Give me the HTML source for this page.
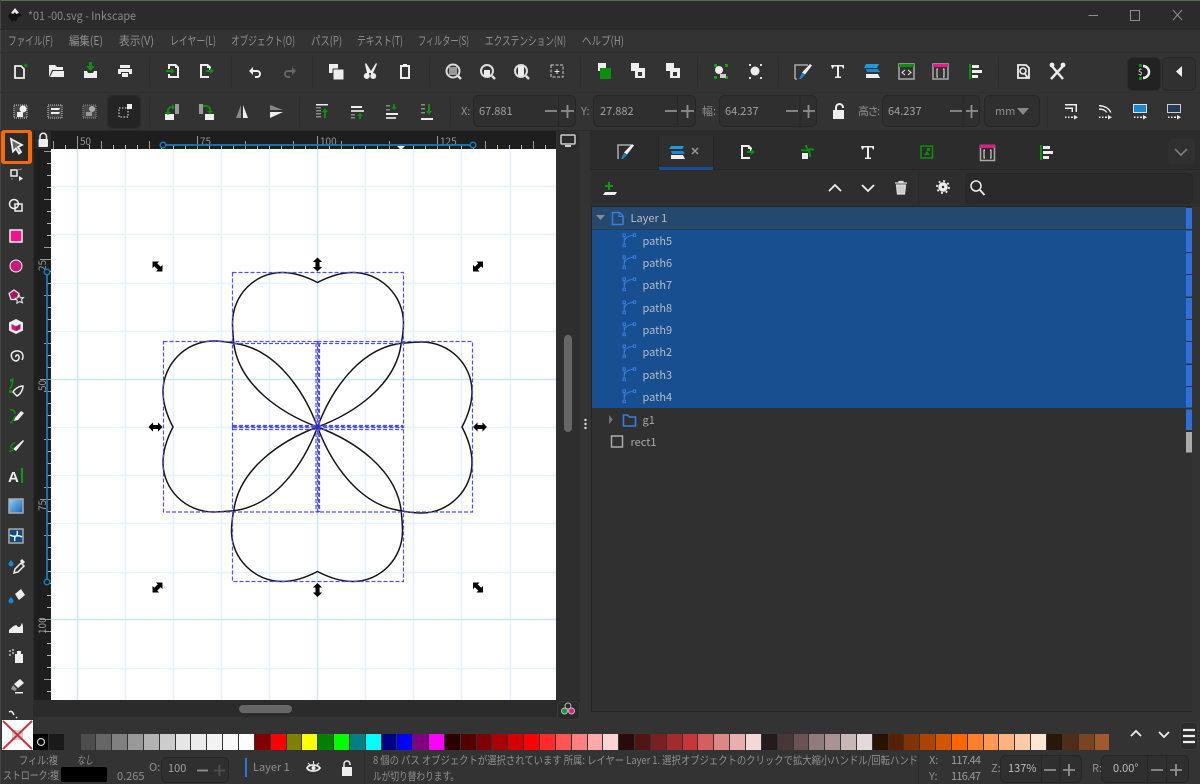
<!DOCTYPE html>
<html lang="ja"><head><meta charset="utf-8"><title>Inkscape</title>
<style>
html,body{margin:0;padding:0;width:1200px;height:784px;overflow:hidden;background:#333}
#wrap{position:absolute;left:0;top:0;width:1200px;height:784px;filter:blur(.3px)}
svg{position:absolute;left:0;top:0;display:block}
text{font-family:"Noto Sans CJK JP","Liberation Sans",sans-serif;font-size:11px;fill:#8f8f8f}
#pal{position:absolute;left:33px;top:734px;height:16px;display:flex}
#pal i{display:block;width:14.85px;height:16px;margin-right:1px}
</style></head><body><div id="wrap">
<svg width="1200" height="784" viewBox="0 0 1200 784" xmlns="http://www.w3.org/2000/svg">
<defs>
<symbol id="br" viewBox="0 0 16 16" overflow="visible"><g fill="none" stroke="#3a7de0" stroke-width="1"><rect x="1" y="1" width="2.600" height="2.600"/><rect x="1" y="12" width="2.600" height="2.600"/><rect x="12" y="1" width="2.600" height="2.600"/><path d="M2.300 3.600V12M2.500 9C3 5 7 3 12 2.400"/></g></symbol>
<path id="ar" d="M-6.500 0L-2.800-3.800V-1.700H2.800V-3.800L6.500 0 2.800 3.800V1.700H-2.800V3.800Z" fill="#000" stroke="#000" stroke-width=".7"/>
</defs>
<!-- window -->
<rect width="1200" height="784" fill="#333"/>
<rect width="1200" height="29" fill="#2b2b2b"/>
<rect width="1200" height="1" fill="#4f6f4f"/>
<rect x="0" width="1" height="784" fill="#444"/>
<g transform="translate(15,15)"><path d="M0-7 7 1 3 2 1 7-1 5-3 7-7 1Z" fill="#111"/><path d="M0-7 4-2 1-1 0-3-2-1-4-2Z" fill="#eee"/></g>
<text x="28" y="20" style="font-size:11.500px;fill:#8a8a8a" textLength="108" lengthAdjust="spacingAndGlyphs">*01 -00.svg - Inkscape</text>
<g stroke="#8f8f8f" fill="none" stroke-width="1"><path d="M1088.500 15.500H1098"/><rect x="1130.500" y="10.500" width="9" height="10"/><path d="M1173 10l9 10M1182 10l-9 10"/></g>
<!-- menu -->
<rect y="29" width="1200" height="1" fill="#2a2a2a"/>
<g style="font-size:12px">
<text x="8" y="45" style="font-size:12px" textLength="45" lengthAdjust="spacingAndGlyphs">ファイル(F)</text>
<text x="69" y="45" style="font-size:12px" textLength="34" lengthAdjust="spacingAndGlyphs">編集(E)</text>
<text x="119" y="45" style="font-size:12px" textLength="35" lengthAdjust="spacingAndGlyphs">表示(V)</text>
<text x="170" y="45" style="font-size:12px" textLength="46" lengthAdjust="spacingAndGlyphs">レイヤー(L)</text>
<text x="231" y="45" style="font-size:12px" textLength="64" lengthAdjust="spacingAndGlyphs">オブジェクト(O)</text>
<text x="311" y="45" style="font-size:12px" textLength="31" lengthAdjust="spacingAndGlyphs">パス(P)</text>
<text x="357" y="45" style="font-size:12px" textLength="46" lengthAdjust="spacingAndGlyphs">テキスト(T)</text>
<text x="418" y="45" style="font-size:12px" textLength="51" lengthAdjust="spacingAndGlyphs">フィルター(S)</text>
<text x="485" y="45" style="font-size:12px" textLength="81" lengthAdjust="spacingAndGlyphs">エクステンション(N)</text>
<text x="582" y="45" style="font-size:12px" textLength="42" lengthAdjust="spacingAndGlyphs">ヘルプ(H)</text>
</g>
<rect y="52" width="1200" height="1" fill="#2d2d2d"/>
<rect y="92" width="1200" height="1" fill="#2f2f2f"/>
<rect y="130" width="1200" height="1" fill="#2a2a2a"/>
<!-- toolbar separators -->
<g fill="#2c2c2c"><rect x="149" y="57" width="1" height="30"/><rect x="231" y="57" width="1" height="30"/><rect x="312" y="57" width="1" height="30"/><rect x="429" y="57" width="1" height="30"/><rect x="580" y="57" width="1" height="30"/><rect x="697" y="57" width="1" height="30"/><rect x="778" y="57" width="1" height="30"/><rect x="998" y="57" width="1" height="30"/>
<rect x="149" y="97" width="1" height="30"/><rect x="299" y="97" width="1" height="30"/><rect x="450" y="97" width="1" height="30"/><rect x="1047" y="97" width="1" height="30"/></g>
<!-- row 1 icons -->
<g fill="#eee" stroke="none">
<path d="M15 66h6l3 3v9H15Z" fill="none" stroke="#eee" stroke-width="1.800"/><path d="M25 63l1 1.500 1.500-.5-.5 1.500 1 1.500-2 0-1 1-.5-2-1.500-1 2-.5Z" fill="#0a8f0a"/>
<path d="M49 65h6l2 2h6v3H52l-3 7Z"/><path d="M50 77l3-6h11v6Z"/>
<path d="M84 71h3l1 2h5l1-2h3v7H84Z"/><path d="M89 62h3v4h3l-4.500 5-4.500-5h3Z" fill="#0a8f0a"/>
<path d="M120 65h10v3h-10ZM118 69h14v5h-3v-2h-8v2h-3ZM122 73h6v4h-6Z"/>
<path d="M168 64h8l3 3v11h-11v-4h2v2h7v-8h-2v-2h-5v3h-2Z"/><path d="M166 70h5v-2l4 3-4 3v-2h-5Z" fill="#0a8f0a"/>
<path d="M200 64h8l3 3v3h-2v-2h-2v-2h-5v10h7v2h-9Z"/><path d="M206 70h4v-2l4 3-4 3v-2h-4Z" fill="#0a8f0a"/>
<path d="M249 71l4-4v3h4a3.500 3.500 0 0 1 0 8h-2v-2h2a1.500 1.500 0 0 0 0-4h-4v3Z"/>
<path d="M296 71l-4-4v3h-4a3.500 3.500 0 0 0 0 8h2v-2h-2a1.500 1.500 0 0 1 0-4h4v3Z" fill="#666"/>
<rect x="329" y="64" width="9" height="9"/><rect x="333" y="69" width="11" height="11" stroke="#333"/>
<path d="M366 63l5 8 5-8 1 1-4 9a3 3 0 1 1-2 1l0-1-2-0 0 1a3 3 0 1 1-2-1l-2-9Z"/>
<path d="M400 65h3v-1h4v1h3v14h-10Zm2 2v10h6V67Z"/>
<g fill="none" stroke="#ddd"><circle cx="453" cy="71" r="6.500" stroke-width="2"/><path d="M458 76l3 3" stroke-width="2.500"/><circle cx="487" cy="71" r="6" stroke-width="2"/><path d="M492 76l3 3" stroke-width="2.500"/><circle cx="521" cy="71" r="6" stroke-width="2"/><path d="M526 76l3 3" stroke-width="2.500"/><rect x="551" y="65" width="12" height="12" stroke="#ccc" stroke-dasharray="3 1.500"/><path d="M557 69v5M554.500 71.500h5" stroke-width="1"/></g>
<rect x="449" y="67" width="8" height="8" fill="#999"/><rect x="484" y="70" width="6" height="6"/><rect x="518" y="66" width="6" height="10" rx="2"/>
<rect x="598" y="63" width="8" height="8"/><rect x="600" y="68" width="11" height="11" fill="#0a8f0a"/>
<rect x="631" y="63" width="8" height="8"/><rect x="635" y="68" width="10" height="10"/><rect x="638" y="72" width="4" height="4" fill="#333"/>
<rect x="666" y="63" width="8" height="8"/><rect x="670" y="68" width="10" height="10"/><rect x="673" y="72" width="4" height="4" fill="#333"/>
<g fill="#0fa00f"><rect x="714" y="64" width="3" height="3"/><rect x="725" y="64" width="3" height="3"/><rect x="714" y="76" width="3" height="3"/><rect x="725" y="76" width="3" height="3"/></g>
<circle cx="719" cy="70" r="4"/><path d="M720 74h6v4h-6Z" fill="#ccc"/>
<g fill="#ddd"><rect x="749" y="64" width="2" height="2"/><rect x="760" y="64" width="2" height="2"/><rect x="749" y="77" width="2" height="2"/><rect x="760" y="77" width="2" height="2"/></g><circle cx="755" cy="71" r="4.500"/>
<path d="M795 79V65h13M795 79h2" fill="none" stroke="#aaa" stroke-width="1.500"/><path d="M810 64l2 1.500-7 9-3-2Z"/><path d="M802 73l3 2-4 4-2 0Z" fill="#1b87d0"/>
<path d="M831 65h13v3.500h-1l-1-2h-3v10h2v1.500h-6V76.500h2v-10h-3l-1 2h-1Z"/>
<path d="M866 64h13l-2 4h-13Z" fill="#1b9ce0"/><path d="M866 69h12l2 3h-13Z" fill="#1b87d0"/><path d="M866 74h12l2 4h-14Z"/>
<rect x="899" y="64" width="15" height="15" fill="none" stroke="#aaa" stroke-width="1.500"/><rect x="899" y="64" width="15" height="3" fill="#0a8f0a"/><path d="M905 70l-3 2.500 3 2.500M908 70l3 2.500-3 2.500" fill="none" stroke="#eee"/>
<rect x="933" y="64" width="15" height="15" fill="none" stroke="#aaa" stroke-width="1.500"/><rect x="933" y="64" width="15" height="3" fill="#f0148c"/><path d="M938 69h-1v8h1M943 69h1v8h-1" fill="none" stroke="#eee"/>
<rect x="969" y="64" width="2" height="15" fill="#0a8f0a"/><rect x="972" y="65" width="7" height="3"/><rect x="972" y="70" width="10" height="3"/><rect x="972" y="75" width="6" height="3"/>
<path d="M1018 65h8l3 3v10h-11Z" fill="none" stroke="#eee" stroke-width="1.800"/><circle cx="1023" cy="71" r="3" fill="none" stroke="#eee" stroke-width="1.600"/><path d="M1025 74l3 4" stroke="#eee" stroke-width="1.800"/>
<path d="M1051 65l12 14M1064 65l-13 14" stroke="#eee" stroke-width="2.400"/><circle cx="1052" cy="65" r="2.400" fill="#eee"/><circle cx="1063" cy="65" r="2.400" fill="#eee"/>
</g>
<!-- snap buttons -->
<rect x="1127.500" y="57.500" width="33" height="33" rx="5" fill="#222" stroke="#2c2c2c"/>
<path d="M1143 66a6 6 0 0 1 0 12" fill="none" stroke="#eee" stroke-width="2.500"/><rect x="1139" y="64" width="3" height="3" fill="#0a8f0a"/><rect x="1139" y="77" width="3" height="3" fill="#0a8f0a"/><text x="1138" y="75" style="font-size:8px;fill:#eee">$</text>
<rect x="1162.500" y="57.500" width="33" height="33" rx="5" fill="#303030" stroke="#2a2a2a"/>
<path d="M1182 66v11l-6-5.500Z" fill="#eee"/>
<!-- row 2 icons -->
<g fill="#eee">
<rect x="14" y="105" width="13" height="13" fill="#444" stroke="#ccc" stroke-dasharray="1 1"/><circle cx="23" cy="109" r="3.500"/><rect x="17" y="112" width="6" height="5"/>
<rect x="48" y="105" width="14" height="13" fill="#444" stroke="#ccc" stroke-dasharray="1 1"/><path d="M51 108h9l-1 2h-8ZM51 112h9l-1 2h-8Z"/>
<rect x="83" y="105" width="13" height="13" fill="#4a4a4a" stroke="#888" stroke-dasharray="1 1"/><circle cx="92" cy="109" r="3" fill="#aaa"/><rect x="86" y="112" width="6" height="4" fill="#999"/>
</g>
<rect x="107.500" y="95.500" width="33" height="33" rx="5" fill="#242424" stroke="#2c2c2c"/>
<rect x="119" y="108" width="9" height="9" fill="none" stroke="#eee" stroke-dasharray="1.500 1.500"/><rect x="127" y="104" width="5" height="5" fill="#eee"/>
<g fill="#eee">
<rect x="165" y="114" width="9" height="6"/><rect x="175" y="104" width="4" height="10" fill="#999"/><path d="M167 112a5 5 0 0 1 5-6v-2l3 3-3 3v-2a3 3 0 0 0-3 4h2l-3 3-3-3Z" fill="#0a8f0a"/>
<rect x="199" y="104" width="4" height="10" fill="#999"/><rect x="205" y="114" width="9" height="6"/><path d="M203 105h3a5 5 0 0 1 5 6h2l-3 3-3-3h2a3 3 0 0 0-3-4h-3Z" fill="#0a8f0a"/>
<path d="M241 105v13h-5Z" fill="#888"/><path d="M243 105l5 13h-5Z"/>
<path d="M270 105l13 5h-13Z" fill="#888"/><path d="M270 112h13l-13 6Z"/>
<rect x="316" y="104" width="12" height="1.500"/><g fill="#888"><rect x="316" y="107" width="5" height="1.500"/><rect x="316" y="110" width="5" height="1.500"/><rect x="316" y="113" width="5" height="1.500"/><rect x="316" y="116" width="5" height="1.500"/></g><path d="M325 108l3 4h-2v6h-2v-6h-2Z" fill="#0a8f0a"/>
<rect x="351" y="106" width="11" height="2"/><rect x="351" y="110" width="13" height="2" fill="#ccc"/><g fill="#888"><rect x="351" y="114" width="4" height="1.500"/><rect x="351" y="117" width="4" height="1.500"/></g><path d="M360 113l3 3h-2v3h-2v-3h-2Z" fill="#0a8f0a"/>
<rect x="386" y="113" width="12" height="2"/><rect x="386" y="117" width="10" height="2" fill="#ccc"/><g fill="#888"><rect x="386" y="105" width="4" height="1.500"/><rect x="386" y="109" width="4" height="1.500"/></g><path d="M395 104v3h2l-3 3-3-3h2v-3Z" fill="#0a8f0a"/>
<rect x="421" y="118" width="12" height="2"/><g fill="#888"><rect x="421" y="104" width="4" height="1.500"/><rect x="421" y="108" width="4" height="1.500"/><rect x="421" y="112" width="4" height="1.500"/></g><path d="M430 104v7h2l-3 4-3-4h2v-7Z" fill="#0a8f0a"/>
<path d="M833 110h11v9h-11Z"/><path d="M836 110v-2.500a3.500 3.500 0 0 1 7 0v.5" fill="none" stroke="#eee" stroke-width="2"/>
</g>
<!-- row 2 fields -->
<g fill="#2f2f2f" stroke="#272727"><rect x="473.500" y="95.500" width="102" height="31" rx="5"/><rect x="593.500" y="95.500" width="102" height="31" rx="5"/><rect x="719.500" y="95.500" width="97" height="31" rx="5"/><rect x="882.500" y="95.500" width="97" height="31" rx="5"/><rect x="984.500" y="95.500" width="55" height="31" rx="5"/></g>
<g>
<text x="461" y="115">X:</text><text x="479" y="115" style="fill:#a0a0a0">67.881</text>
<text x="581" y="115">Y:</text><text x="600" y="115" style="fill:#a0a0a0">27.882</text>
<text x="702" y="115">幅:</text><text x="725" y="115" style="fill:#a0a0a0">64.237</text>
<text x="858" y="115" textLength="22">高さ:</text><text x="888" y="115" style="fill:#a0a0a0">64.237</text>
<text x="995" y="115">mm</text></g>
<path d="M1017 108h12l-6 7Z" fill="#888"/>
<g stroke="#8f8f8f" stroke-width="1.800" fill="none"><path d="M545 111h12M561 111h13M567.500 105v13M665 111h12M681 111h13M687.500 105v13M786 111h12M803 111h12M808.500 105v13M950 111h12M966 111h12M971.500 105v13"/></g>
<path d="M558.500 96v30M677.500 96v30M800 96v30M963 96v30" stroke="#272727" fill="none"/>
<g fill="#eee">
<path d="M1065 104h12v8h-1.500v-6.500H1065ZM1065 107.500h8v4.500h-1.500v-3H1065Z"/><path d="M1065 116.500h1.500v1.500H1065ZM1068 116.500h1.500v1.500H1068ZM1071 116.500h2v1.500h-2Z"/><path d="M1074 115l4 2.250-4 2.250Z"/>
<path d="M1099 105a13 11 0 0 1 12.500 7.500h-1.500a11 9 0 0 0-11-6ZM1099 108.500a8 7 0 0 1 8.500 4h-1.500a6.500 5 0 0 0-7-2.500Z"/><path d="M1099 116.500h1.500v1.500H1099ZM1102 116.500h1.500v1.500H1102ZM1105 116.500h2v1.500h-2Z"/><path d="M1108 115l4 2.250-4 2.250Z"/>
<rect x="1133.500" y="104.500" width="13" height="8" fill="#1b87d0" stroke="#ddd"/><path d="M1134 116.500h1.500v1.500H1134ZM1137 116.500h1.500v1.500H1137ZM1140 116.500h2v1.500h-2Z"/><path d="M1143 115l4 2.250-4 2.250Z"/>
<rect x="1167.500" y="104.500" width="13" height="8" fill="#223a5c" stroke="#ccc"/><path d="M1168 116.500h1.500v1.500H1168ZM1171 116.500h1.500v1.500H1171ZM1174 116.500h2v1.500h-2Z"/><path d="M1177 115l4 2.250-4 2.250Z"/></g>
<!-- left tools -->
<rect x="33" y="131" width="1" height="600" fill="#2a2a2a"/>
<rect x="1" y="130" width="31" height="34" rx="3" fill="#ff6a00"/><rect x="5" y="133" width="23" height="28" fill="#2a2a2a"/>
<path d="M11 139l11 6-4 2 3 5-2 1.500-3-5-3 3Z" fill="#666" stroke="#eee" stroke-width="1.800"/>
<g fill="#eee">
<rect x="11" y="170" width="6" height="6" fill="none" stroke="#eee" stroke-width="1.500"/><path d="M17 170l5-1M12 178v2" stroke="#888" fill="none"/><path d="M19 176l4 2.500-4 2.500Z"/>
<circle cx="14" cy="204" r="4.500" fill="none" stroke="#eee" stroke-width="1.500"/><rect x="15" y="204" width="7" height="7" fill="none" stroke="#eee" stroke-width="1.500"/>
<rect x="10" y="230" width="12" height="12" fill="#f0148c" stroke="#eee" stroke-width="1.500"/>
<circle cx="16" cy="266" r="6" fill="#c9197f" stroke="#eee" stroke-width="1"/>
<path d="M14 290l5 3.500-2 6-6 0-2-6Z" fill="#a81565" stroke="#eee" stroke-width="1.200"/><path d="M19 295l1.500 2.800 3-.3-2 2.300 1 3-3-1.200-2.600 1.700.3-3-2.200-2 3-.6Z" fill="#333" stroke="#eee" stroke-width="1"/>
<path d="M16 319l7 3.500v8l-7 3.500-7-3.500v-8Z"/><path d="M11.500 324l4.500 2.200v5l-4.500-2.200Z" fill="#d6176f"/><path d="M20.500 324l-4.500 2.200v5l4.500-2.200Z" fill="#a81565"/>
<g fill="none" stroke="#eee" stroke-width="1.500"><path d="M16 357a1.500 1.500 0 0 1 2-2 3.500 3.500 0 0 1-2 6 5.500 5.500 0 0 1-4-8 7 7 0 0 1 10 0 7 7 0 0 1 0 7"/>
<path d="M13 392c3-5 8-6 10-6 0 3-2 8-6 10Z"/><path d="M13 378c0 4-1 8-3 11" stroke="#0a8f0a"/>
<path d="M10 423c4-1 3-5 6-7" stroke="#0a8f0a"/><path d="M10 410c3-1 5 1 5 4" stroke="#0a8f0a"/></g>
<rect x="10" y="379" width="3" height="3" fill="#0a8f0a"/><rect x="9" y="390" width="3" height="3" fill="#0a8f0a"/>
<path d="M15 418l6-7 3 2-6 7-4 1Z"/>
<path d="M13 449l10-9 1 1-8 10Z"/><path d="M9 451c3 1 6-2 3-3s1-5 3-5" fill="none" stroke="#0a8f0a" stroke-width="1.500"/>
</g>
<text x="8" y="482" style="font-size:15px;font-weight:700;fill:#eee;font-family:'Liberation Sans',sans-serif">A</text><rect x="21" y="468" width="2" height="15" fill="#0a9a0a"/>
<defs><linearGradient id="gr" x1="0" y1="0" x2="1" y2="1"><stop offset="0" stop-color="#9ad0f5"/><stop offset="1" stop-color="#0c62b8"/></linearGradient></defs>
<rect x="9" y="499" width="14" height="14" fill="url(#gr)" stroke="#aaa" stroke-width="1.500"/>
<rect x="9" y="529" width="14" height="14" fill="#174a7c" stroke="#aaa" stroke-width="1.500"/><path d="M10 535c3 2 5 1 6 1s2-3 1-5M22 537c-3-2-5-1-6-1s-2 3-1 5" fill="none" stroke="#dff" stroke-width="1.500"/>
<g fill="#eee"><path d="M15 569l6-6 3 3-6 6-4 1Z" fill="none" stroke="#eee" stroke-width="1.500"/><path d="M20 561l2-2 3 3-2 2Z"/><path d="M11 560c2 2.500 2.500 3 2.500 4a2.500 2.500 0 0 1-5 0c0-1 .5-1.500 2.500-4Z" fill="#1b87d0"/>
<path d="M15 594l6-5 4 6-6 5Z"/><path d="M11 597c2 2.500 2.500 3 2.500 4a2.500 2.500 0 0 1-5 0c0-1 .5-1.500 2.500-4Z" fill="#1b87d0"/>
<path d="M9 633v-3c2-2 4-4 7-5 1 0 1 2 3 2s2-3 3-4c1 2 1 4 1 5v5Z"/>
<rect x="15" y="654" width="8" height="9"/><rect x="17" y="651" width="4" height="3"/><g fill="#999"><rect x="9" y="650" width="2" height="2"/><rect x="12" y="652" width="2" height="2"/><rect x="9" y="654" width="2" height="2"/><rect x="12" y="649" width="2" height="2"/></g>
<path d="M14 684l6-5 4 4-6 5Z"/><path d="M13 685l4 4-2 2-4-2Z" fill="#999"/><rect x="15" y="692" width="8" height="1.500"/>
</g>
<path d="M9 712c3-2 4 1 5 3M16 717l1 1" stroke="#eee" fill="none" stroke-width="1.500"/>
<!-- ruler + canvas -->
<rect x="34" y="131" width="522" height="18" fill="#1e1e1e"/>
<rect x="34" y="149" width="17" height="551" fill="#1e1e1e"/>
<rect x="51" y="149" width="505" height="551" fill="#fff"/>
<!-- grid -->
<g stroke="#e3f3fc" stroke-width="1.500"><path d="M125.500 149V700M173.500 149V700M221.500 149V700M269.500 149V700M365.500 149V700M413.500 149V700M461.500 149V700M510.500 149V700"/>
<path d="M51 186.500H556M51 234.500H556M51 283.500H556M51 331.500H556M51 427.500H556M51 475.500H556M51 523.500H556M51 572.500H556M51 668.500H556"/></g>
<g stroke="#c8e8f8" stroke-width="1.500"><path d="M77.500 149V700M317.500 149V700M51 379.500H556M51 619.500H556"/></g>
<!-- ruler ticks -->
<g stroke="#bbb" fill="none"><path d="M53 147H556" stroke-width="4" stroke-dasharray="1 11"/><path d="M53 145H556" stroke-width="8" stroke-dasharray="1 47" stroke="#999"/><path d="M49 151V700" stroke-width="4" stroke-dasharray="1 11"/><path d="M47 151V700" stroke-width="6" stroke-dasharray="1 47" stroke="#999"/>
<path d="M77.500 136V149M197.500 136V149M317.500 136V149M437.500 136V149M40 379.500H51M40 259.500H51M40 619.500H51M40 499.500H51" stroke="#999"/></g>
<rect x="35" y="131" width="16" height="18" rx="2" fill="#2a2a2a"/>
<rect x="38.500" y="139" width="9.500" height="8" rx="1" fill="#eee"/><path d="M40 139v-2.500a3.250 3.250 0 0 1 6.500 0v2.500" fill="none" stroke="#eee" stroke-width="1.500"/>
<g><text x="80" y="145" style="font-size:10px;fill:#999">50</text><text x="200" y="145" style="font-size:10px;fill:#999">75</text><text x="320" y="145" style="font-size:10px;fill:#999">100</text><text x="440" y="145" style="font-size:10px;fill:#999">125</text>
<text transform="translate(46,271) rotate(-90)" style="font-size:10px;fill:#999">25</text><text transform="translate(46,391) rotate(-90)" style="font-size:10px;fill:#999">50</text><text transform="translate(46,511) rotate(-90)" style="font-size:10px;fill:#999">75</text><text transform="translate(46,634) rotate(-90)" style="font-size:10px;fill:#999">100</text></g>
<path d="M163 145H473" stroke="#1a7cbc" stroke-width="1.800"/><circle cx="163" cy="145" r="2.800" fill="#1e1e1e" stroke="#1a7cbc" stroke-width="1.500"/><circle cx="473" cy="145" r="2.800" fill="#1e1e1e" stroke="#1a7cbc" stroke-width="1.500"/>
<path d="M397 146h8l-4 4Z" fill="#fff"/>
<path d="M47 272V582" stroke="#1a7cbc" stroke-width="1.800"/><circle cx="47" cy="272" r="2.800" fill="#1e1e1e" stroke="#1a7cbc" stroke-width="1.500"/><circle cx="47" cy="582" r="2.800" fill="#1e1e1e" stroke="#1a7cbc" stroke-width="1.500"/>
<!-- flower -->
<g fill="none" stroke="#151515" stroke-width="1.500">
<path d="M317.500 427C355 413 395 385 401 345C403 335 403.500 329 403.500 323C403.500 295 380 272.500 353 272.500C340 272.500 328 277 317.500 282.500C307 277 295 272.500 282 272.500C255 272.500 232.500 295 232.500 323C232.500 329 233 335 234 345C240 385 280 413 317.500 427Z"/>
<path d="M317.500 427C355 413 395 385 401 345C403 335 403.500 329 403.500 323C403.500 295 380 272.500 353 272.500C340 272.500 328 277 317.500 282.500C307 277 295 272.500 282 272.500C255 272.500 232.500 295 232.500 323C232.500 329 233 335 234 345C240 385 280 413 317.500 427Z" transform="rotate(90 317.500 427)"/>
<path d="M317.500 427C355 413 395 385 401 345C403 335 403.500 329 403.500 323C403.500 295 380 272.500 353 272.500C340 272.500 328 277 317.500 282.500C307 277 295 272.500 282 272.500C255 272.500 232.500 295 232.500 323C232.500 329 233 335 234 345C240 385 280 413 317.500 427Z" transform="rotate(180 317.500 427)"/>
<path d="M317.500 427C355 413 395 385 401 345C403 335 403.500 329 403.500 323C403.500 295 380 272.500 353 272.500C340 272.500 328 277 317.500 282.500C307 277 295 272.500 282 272.500C255 272.500 232.500 295 232.500 323C232.500 329 233 335 234 345C240 385 280 413 317.500 427Z" transform="rotate(270 317.500 427)"/>
</g>
<!-- selection boxes -->
<g fill="none" stroke="#5050e6" stroke-width="1.200" stroke-dasharray="4 2">
<rect x="232.500" y="272.500" width="171" height="155"/>
<rect x="232.500" y="426.500" width="171" height="155"/>
<rect x="163.500" y="341.500" width="155" height="170.500"/>
<rect x="317.500" y="341.500" width="155" height="170.500"/>
<path d="M233 343.500H403M233 425.500H403M233 429.500H403M316 343V512M319.500 343V512"/>
</g>
<circle cx="317.500" cy="427" r="2.500" fill="#2a2ab0" opacity=".8"/>
<!-- handles -->
<use href="#ar" transform="translate(157.500,266.500) rotate(45)"/>
<use href="#ar" transform="translate(478,266.500) rotate(-45)"/>
<use href="#ar" transform="translate(157.500,587.500) rotate(-45)"/>
<use href="#ar" transform="translate(478,587.500) rotate(45)"/>
<use href="#ar" transform="translate(317.500,264.500) rotate(90)"/>
<use href="#ar" transform="translate(317.500,590) rotate(90)"/>
<use href="#ar" transform="translate(155.500,427)"/>
<use href="#ar" transform="translate(480,427)"/>
<!-- right scroll / bottom -->
<rect x="556" y="131" width="24" height="586" fill="#2e2e2e"/>
<rect x="558.500" y="132.500" width="20" height="17" rx="3" fill="#2a2a2a"/>
<rect x="561" y="135" width="14" height="9" rx="1" fill="none" stroke="#ccc" stroke-width="1.500"/><path d="M565 146h6" stroke="#ccc" stroke-width="2"/>
<rect x="564" y="335" width="8" height="97" rx="4" fill="#666"/>
<rect x="34" y="700" width="546" height="17" fill="#2b2b2b"/>
<rect x="239" y="705" width="53" height="8" rx="4" fill="#666"/>
<rect x="557.500" y="701.500" width="22" height="18" rx="4" fill="#2a2a2a" stroke="#3a3a3a"/>
<circle cx="568" cy="706" r="3" fill="none" stroke="#bbb"/><circle cx="564.500" cy="711" r="3" fill="#0a9a3a" stroke="#bbb"/><circle cx="571.500" cy="711" r="3" fill="#f0148c" stroke="#bbb"/>
<!-- panel -->
<g fill="#ddd"><circle cx="585.500" cy="420" r="1.200"/><circle cx="585.500" cy="424" r="1.200"/><circle cx="585.500" cy="428" r="1.200"/></g>
<rect x="590" y="131" width="610" height="39" fill="#2c2c2c"/>
<rect x="590" y="170" width="610" height="37" fill="#2e2e2e"/>
<rect x="590" y="169" width="610" height="1" fill="#262626"/>
<rect x="659" y="136" width="54" height="31" fill="#2f2f2f"/>
<rect x="659" y="167" width="54" height="3" fill="#174f90"/>
<path d="M658.500 136v33M713.500 136v33" stroke="#262626" fill="none"/>
<g>
<path d="M618 159V145h13" fill="none" stroke="#aaa" stroke-width="1.500"/><path d="M632 144l2 1.500-7 9-3-2Z" fill="#eee"/><path d="M624 153l3 2-4 4-2 0Z" fill="#1b87d0"/>
<path d="M671 146h13l-2 3h-13Z" fill="#1b9ce0"/><path d="M671 151h12l2 3h-13Z" fill="#1b87d0"/><path d="M671 155h12l2 4h-14Z" fill="#eee"/>
<path d="M692 148l6 6M698 148l-6 6" stroke="#999" stroke-width="1.500" fill="none"/>
<g transform="translate(541,81)"><path d="M200 64h8l3 3v3h-2v-2h-2v-2h-5v10h7v2h-9Z" fill="#eee"/><path d="M206 70h4v-2l4 3-4 3v-2h-4Z" fill="#0a8f0a"/></g>
<rect x="802" y="153" width="6" height="6" fill="#eee"/><path d="M806 145c0 3 2 4 3 6 1 2 1 4 1 6M801 150c2 0 5 1 7 0s4-1 6 0" fill="none" stroke="#0a8f0a" stroke-width="2"/>
<path d="M861 146h13v3.500h-1l-1-2h-3v10h2v1.500h-6V157.500h2v-10h-3l-1 2h-1Z" fill="#eee"/>
<rect x="921" y="146" width="11.500" height="12" fill="none" stroke="#0a8f0a" stroke-width="1.500"/><path d="M924 155l3-4 3 4Z" fill="#0a8f0a"/><rect x="927" y="148" width="3" height="3" fill="#0a8f0a"/>
<rect x="980.500" y="145.500" width="14" height="15" fill="none" stroke="#aaa" stroke-width="1.500"/><rect x="980" y="145" width="15" height="3" fill="#f0148c"/><path d="M985 150h-1v8h1M990 150h1v8h-1" fill="none" stroke="#eee"/>
<rect x="1040" y="145" width="2" height="15" fill="#0a8f0a"/><rect x="1043" y="146" width="7" height="3" fill="#eee"/><rect x="1043" y="151" width="10" height="3" fill="#eee"/><rect x="1043" y="156" width="6" height="3" fill="#eee"/>
</g>
<rect x="1168" y="139" width="27" height="25" rx="4" fill="#303030"/>
<path d="M1175 149l6 6 6-6" fill="none" stroke="#777" stroke-width="1.800"/>
<!-- panel toolbar -->
<path d="M609 182v8M605 186h8" stroke="#0fa00f" stroke-width="1.800"/><path d="M605 192h12l-2 3h-12Z" fill="#eee"/>
<path d="M829 191l6-6 6 6M862 185l6 6 6-6" fill="none" stroke="#eee" stroke-width="1.800"/>
<path d="M895 183h12M899 183v-1.500h4v1.500M896.500 185l1 9h7l1-9Z" fill="#ccc" stroke="#ddd" stroke-width="1.200"/>
<path d="M918.500 172v32" stroke="#282828"/>
<circle cx="943" cy="187" r="3" fill="none" stroke="#eee" stroke-width="3.500"/><circle cx="943" cy="187" r="6" fill="none" stroke="#eee" stroke-width="1.800" stroke-dasharray="2 2.700"/>
<rect x="965.500" y="173.500" width="227" height="30" rx="5" fill="#2a2a2a" stroke="#262626"/>
<circle cx="976" cy="186" r="5" fill="none" stroke="#eee" stroke-width="1.500"/><path d="M980 190l4.500 5" stroke="#eee" stroke-width="1.800"/>
<!-- list -->
<rect x="592" y="207" width="600" height="504" fill="#303030"/>
<rect x="591" y="206" width="1" height="506" fill="#262626"/>
<rect x="591" y="206" width="601" height="1" fill="#262626"/>
<rect x="591" y="711" width="601" height="1" fill="#262626"/>
<rect x="592" y="207" width="594" height="22.500" fill="#25486f"/>
<rect x="592" y="230" width="594" height="178" fill="#174f90"/>
<path d="M596 215h9l-4.500 5Z" fill="#808b9a"/>
<path d="M612.500 212.500h7l3.500 3.500v8.500h-10.500Z" fill="none" stroke="#3a7de0" stroke-width="1.500"/><path d="M619 212.500v4h4" fill="none" stroke="#3a7de0" stroke-width="1"/>
<g><text x="630.500" y="222" style="fill:#b4bcc6">Layer 1</text>
<text x="642.500" y="245" style="fill:#b4bcc6">path5</text><text x="642.500" y="267" style="fill:#b4bcc6">path6</text><text x="642.500" y="289" style="fill:#b4bcc6">path7</text><text x="642.500" y="312" style="fill:#b4bcc6">path8</text><text x="642.500" y="334" style="fill:#b4bcc6">path9</text><text x="642.500" y="356" style="fill:#b4bcc6">path2</text><text x="642.500" y="379" style="fill:#b4bcc6">path3</text><text x="642.500" y="401" style="fill:#b4bcc6">path4</text>
<text x="642.500" y="424" style="fill:#a8a8a8">g1</text><text x="630.500" y="446" style="fill:#a8a8a8">rect1</text></g>
<use href="#br" x="622" y="233" width="15" height="15"/><use href="#br" x="622" y="255" width="15" height="15"/><use href="#br" x="622" y="277" width="15" height="15"/><use href="#br" x="622" y="300" width="15" height="15"/><use href="#br" x="622" y="322" width="15" height="15"/><use href="#br" x="622" y="344" width="15" height="15"/><use href="#br" x="622" y="367" width="15" height="15"/><use href="#br" x="622" y="389" width="15" height="15"/>
<path d="M609 415v9l4-4.500Z" fill="#707070"/>
<path d="M623.500 415h4l2 2h6v9h-12Z" fill="none" stroke="#3a7de0" stroke-width="1.500"/>
<rect x="611.500" y="436" width="11" height="11" fill="none" stroke="#aaa" stroke-width="1.500"/>
<g fill="#2f6fd8"><rect x="1186" y="208" width="6" height="21"/><rect x="1186" y="230.500" width="6" height="21.500"/><rect x="1186" y="253" width="6" height="21"/><rect x="1186" y="275" width="6" height="21.500"/><rect x="1186" y="298" width="6" height="21"/><rect x="1186" y="320" width="6" height="21"/><rect x="1186" y="342" width="6" height="21.500"/><rect x="1186" y="365" width="6" height="21"/><rect x="1186" y="387" width="6" height="20.500"/><rect x="1186" y="409.500" width="6" height="20.500"/></g>
<rect x="1186" y="432" width="6" height="20.500" fill="#aaa"/>
<!-- fill/stroke indicator -->
<rect x="2" y="720" width="31" height="30" fill="#fff"/><rect x="12" y="730" width="11" height="10" fill="#ccc"/><path d="M3 721l29 28M32 721 3 749" stroke="#c8343e" stroke-width="2"/>
<!-- palette right buttons -->
<path d="M1131 736l5-5 5 5M1159 732l5 5 5-5" fill="none" stroke="#eee" stroke-width="1.800"/>
<rect x="1180.500" y="722.500" width="17" height="27" rx="4" fill="#2b2b2b" stroke="#3c3c3c"/>
<path d="M1183 730h12M1183 736h12M1183 742h12" stroke="#eee" stroke-width="2.200"/>
<!-- status -->
<g>
<text x="19" y="764" textLength="39" lengthAdjust="spacingAndGlyphs">フィル:複</text>
<text x="77" y="764" textLength="16" lengthAdjust="spacingAndGlyphs" font-style="italic">なし</text>
<text x="3" y="779" textLength="56" lengthAdjust="spacingAndGlyphs">ストローク:複</text>
<text x="117" y="780">0.265</text>
<text x="149" y="771">O:</text>
</g>
<rect x="61" y="767" width="46" height="15" rx="2" fill="#000"/>
<rect x="161.500" y="757.500" width="67" height="25" rx="5" fill="#2f2f2f" stroke="#272727"/>
<text x="168" y="772" style="fill:#a0a0a0">100</text>
<path d="M197 770.500h11" stroke="#8f8f8f" stroke-width="1.800"/><path d="M214 770.500h11M219.500 765v11" stroke="#505050" stroke-width="1.800"/>
<rect x="245" y="758" width="2" height="19" fill="#2f6fd8"/>
<text x="253" y="771">Layer 1</text>
<path d="M307 768c2-4 10-4 13 0-3 4-11 4-13 0Z" fill="none" stroke="#eee" stroke-width="1.800"/><circle cx="313.500" cy="768" r="2" fill="#eee"/><path d="M308 763l2 2M313.500 761v3M319 763l-2 2" stroke="#eee"/>
<rect x="342" y="767" width="10" height="9" fill="#eee"/><path d="M344 767v-3a3 3 0 0 1 6 0v1" fill="none" stroke="#eee" stroke-width="1.500"/>
<path d="M364.500 752v32M918.500 752v32" stroke="#2c2c2c"/>
<text x="373" y="764" textLength="545" lengthAdjust="spacingAndGlyphs">8 個の パス オブジェクトが選択されています 所属: レイヤー Layer 1. 選択オブジェクトのクリックで拡大縮小ハンドル/回転ハンド</text>
<text x="373" y="780" textLength="86" lengthAdjust="spacingAndGlyphs">ルが切り替わります。</text>
<text x="929" y="764">X:</text><text x="951" y="764" textLength="30" style="fill:#9a9a9a">117.44</text>
<text x="929" y="780">Y:</text><text x="951" y="780" textLength="30" style="fill:#9a9a9a">116.47</text>
<text x="991" y="772">Z:</text>
<rect x="1000.500" y="755.500" width="81" height="27" rx="5" fill="#2f2f2f" stroke="#272727"/>
<text x="1008" y="772" style="fill:#bbb">137%</text>
<path d="M1044 770h12M1063 770h12M1069 764v12" stroke="#8f8f8f" stroke-width="1.800"/>
<path d="M1041.500 756v26M1060 756v26" stroke="#272727"/>
<text x="1092" y="772">R:</text>
<rect x="1101.500" y="755.500" width="87" height="27" rx="5" fill="#2f2f2f" stroke="#272727"/>
<text x="1113" y="772" style="fill:#bbb">0.00°</text>
<path d="M1151 770h12M1170 770h12M1176 764v12" stroke="#8f8f8f" stroke-width="1.800"/>
<path d="M1147.500 756v26M1166.500 756v26" stroke="#272727"/>
</svg>
<div id="pal"><i style="background:#000"></i><i style="background:#1a1a1a"></i><i style="background:#333"></i><i style="background:#4d4d4d"></i><i style="background:#666"></i><i style="background:#808080"></i><i style="background:#999"></i><i style="background:#b3b3b3"></i><i style="background:#ccc"></i><i style="background:#e6e6e6"></i><i style="background:#ececec"></i><i style="background:#f2f2f2"></i><i style="background:#f9f9f9"></i><i style="background:#fff"></i><i style="background:#800000"></i><i style="background:#f00"></i><i style="background:#808000"></i><i style="background:#ff0"></i><i style="background:#008000"></i><i style="background:#0f0"></i><i style="background:#008080"></i><i style="background:#0ff"></i><i style="background:#000080"></i><i style="background:#00f"></i><i style="background:#800080"></i><i style="background:#f0f"></i><i style="background:#2b0000"></i><i style="background:#500"></i><i style="background:#800000"></i><i style="background:#a00"></i><i style="background:#d40000"></i><i style="background:#f00"></i><i style="background:#ff2a2a"></i><i style="background:#f55"></i><i style="background:#ff8080"></i><i style="background:#faa"></i><i style="background:#ffd5d5"></i><i style="background:#280b0b"></i><i style="background:#501616"></i><i style="background:#782121"></i><i style="background:#a02c2c"></i><i style="background:#c83737"></i><i style="background:#d35f5f"></i><i style="background:#de8787"></i><i style="background:#e9afaf"></i><i style="background:#f4d7d7"></i><i style="background:#241c1c"></i><i style="background:#483737"></i><i style="background:#6c5353"></i><i style="background:#917c7c"></i><i style="background:#ac9393"></i><i style="background:#c8b7b7"></i><i style="background:#e3dbdb"></i><i style="background:#2b1100"></i><i style="background:#520"></i><i style="background:#803300"></i><i style="background:#a40"></i><i style="background:#d45500"></i><i style="background:#f60"></i><i style="background:#ff7f2a"></i><i style="background:#f95"></i><i style="background:#ffb380"></i><i style="background:#fca"></i><i style="background:#ffe6d5"></i><i style="background:#28170b"></i><i style="background:#502d16"></i><i style="background:#784421"></i><i style="background:#a05a2c"></i></div>
<svg width="60" height="784"><circle cx="41" cy="742" r="3.500" fill="none" stroke="#ccc" stroke-width="1.200"/></svg>
</div></body></html>
